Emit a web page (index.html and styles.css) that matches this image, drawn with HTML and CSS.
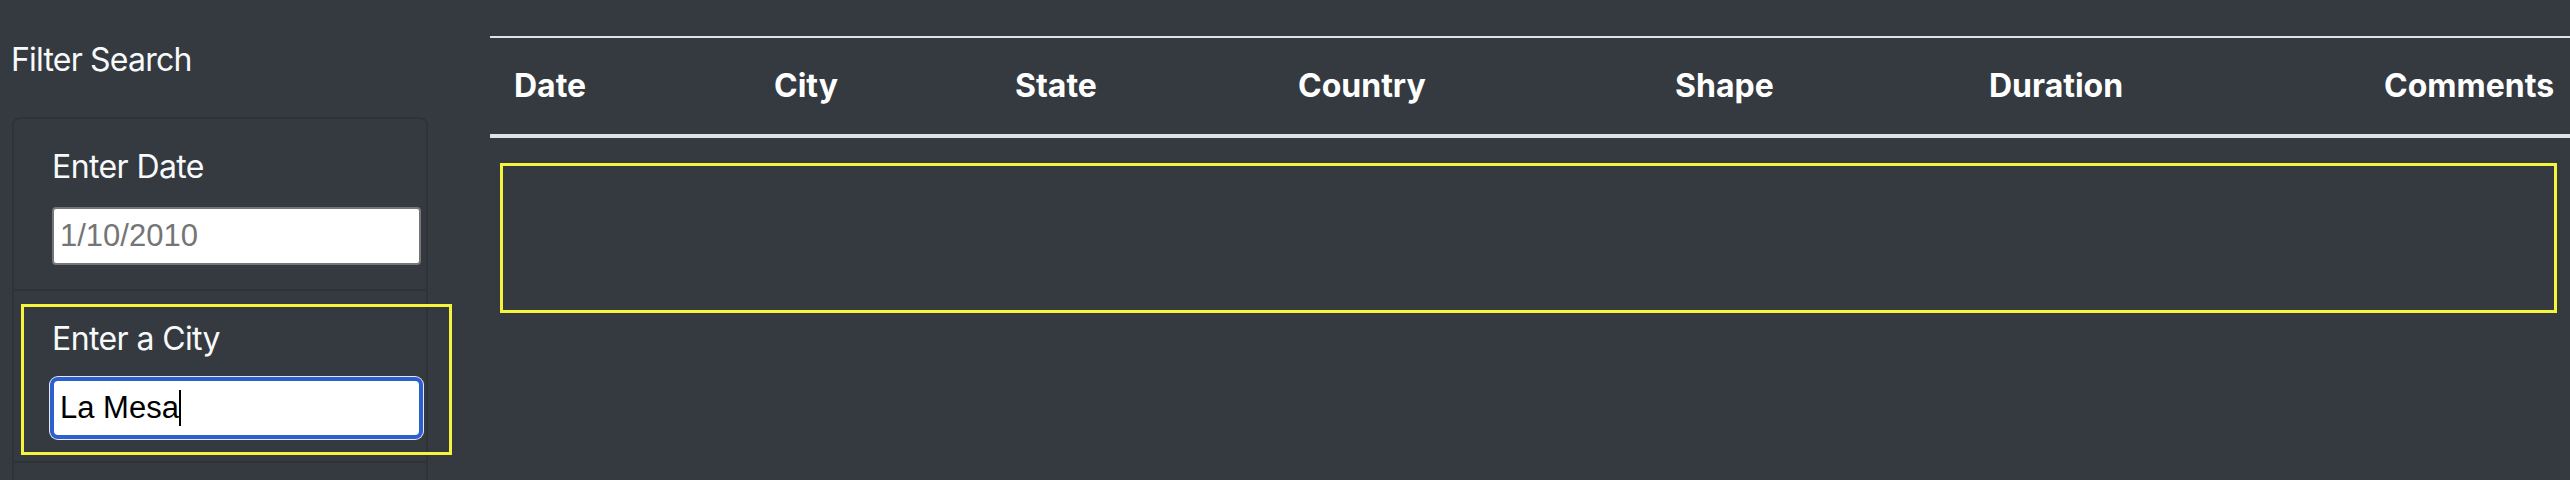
FILE: index.html
```html
<!DOCTYPE html>
<html lang="en">
<head>
<meta charset="utf-8">
<title>UFO Sightings – Filter Search</title>
<link rel="stylesheet" href="styles.css">
</head>
<body>
<div class="page">
  <aside class="sidebar">
    <p class="sidebar-title">Filter Search</p>
    <form class="card">
      <ul class="filters">
        <li class="filter">
          <label class="filter-label" for="datetime">Enter Date</label>
          <input class="filter-input" id="datetime" type="text" placeholder="1/10/2010">
        </li>
        <li class="filter highlighted">
          <label class="filter-label" for="city">Enter a City</label>
          <div class="field">
            <input class="filter-input focused" id="city" type="text" value="La Mesa">
            <span class="caret"></span>
          </div>
          <span class="highlight-box"></span>
        </li>
      </ul>
    </form>
  </aside>
  <main class="results">
    <table class="ufo-table">
      <thead>
        <tr>
          <th class="col-date">Date</th>
          <th class="col-city">City</th>
          <th class="col-state">State</th>
          <th class="col-country">Country</th>
          <th class="col-shape">Shape</th>
          <th class="col-duration">Duration</th>
          <th class="col-comments">Comments</th>
        </tr>
      </thead>
      <tbody></tbody>
    </table>
    <div class="results-body"></div>
  </main>
</div>
</body>
</html>
```

FILE: styles.css
```css
html, body {
  margin: 0;
  padding: 0;
  overflow: hidden;
  background: #343a40;
}

body {
  color: #ffffff;
  font-family: Inter, "Noto Sans", "DejaVu Sans", sans-serif;
  font-size: 32px;
  line-height: 48px;
}

.page {
  display: flex;
  align-items: flex-start;
}

/* Sidebar */
.sidebar {
  width: 478px;
  flex: 0 0 478px;
  padding-left: 12px;
}

.sidebar-title {
  margin: 0;
  padding-top: 36px;
  margin-left: -1px;
  font-size: 32px;
  line-height: 48px;
  letter-spacing: -0.8px;
  color: #f8f9fa;
}

.card {
  width: 416px;
  min-height: 420px;
  box-sizing: border-box;
  margin: 33px 0 0 0;
  border: 2px solid #2e3339;
  border-radius: 8px;
  background: #343a40;
}

.filters {
  list-style: none;
  margin: 0;
  padding: 0;
}

.filter {
  position: relative;
  padding: 24px 0 24px 38px;
  border-bottom: 2px solid #2e3339;
}

.filter-label {
  display: block;
  margin-bottom: 16px;
  font-size: 32px;
  line-height: 48px;
  letter-spacing: -0.6px;
  color: #f8f9fa;
}

.field {
  position: relative;
  width: 369px;
}

.filter-input {
  display: block;
  width: 369px;
  height: 58px;
  box-sizing: border-box;
  margin: 0;
  padding: 0 6px;
  border: 2px solid #767676;
  border-radius: 4px;
  background: #ffffff;
  color: #000000;
  font-family: "Liberation Sans", Arial, sans-serif;
  font-size: 31px;
  outline: none;
}

.filter-input::placeholder {
  color: #757575;
}

.filter-input.focused {
  border-color: #2d5fcf;
  border-radius: 6px;
  box-shadow: 0 0 0 2px #2d5fcf, 0 0 0 3px #e3e9f6;
  caret-color: transparent;
}

.caret {
  position: absolute;
  left: 127px;
  top: 11px;
  width: 2px;
  height: 36px;
  background: #000000;
}

.highlight-box {
  position: absolute;
  left: 7px;
  top: 13px;
  width: 431px;
  height: 151px;
  box-sizing: border-box;
  border: 3px solid #f6f43c;
  pointer-events: none;
}

/* Results table */
.results {
  flex: 1 1 auto;
  padding-top: 36px;
  min-width: 0;
}

.ufo-table {
  width: 2080px;
  table-layout: fixed;
  border-collapse: collapse;
  border-spacing: 0;
}

.ufo-table th {
  box-sizing: border-box;
  padding: 24px 0 24px 24px;
  border-top: 2px solid #dee2e6;
  border-bottom: 4px solid #dee2e6;
  text-align: left;
  font-weight: 700;
  font-size: 32px;
  line-height: 48px;
  color: #ffffff;
  white-space: nowrap;
}

.col-date { width: 260px; }
.col-city { width: 241px; }
.col-state { width: 283px; }
.col-country { width: 377px; }
.col-shape { width: 314px; }
.col-duration { width: 395px; }
.col-comments { width: 210px; }

.results-body {
  margin: 25px 0 0 10px;
  width: 2057px;
  height: 150px;
  box-sizing: border-box;
  border: 3px solid #f6f43c;
}
```
